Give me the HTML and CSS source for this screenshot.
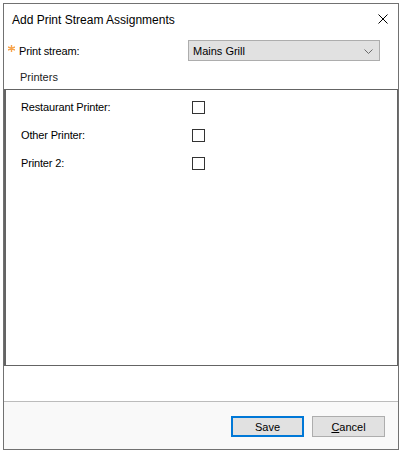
FILE: index.html
```html
<!DOCTYPE html>
<html>
<head>
<meta charset="utf-8">
<link rel="stylesheet" href="styles.css">
</head>
<body>
<div class="window">
  <div class="titlebar">
    <span class="title">Add Print Stream Assignments</span>
    <svg class="close" width="10" height="10" viewBox="0 0 10 10"><path d="M0.5 0.5 L9.5 9.5 M9.5 0.5 L0.5 9.5" stroke="#000" stroke-width="1" fill="none"/></svg>
  </div>
  <div class="stream-row">
    <svg class="req" width="7" height="7" viewBox="0 0 7 7"><path d="M3.5 0 V7 M0 2 L7 5 M0 5 L7 2" stroke="#f7a24a" stroke-width="1.4" fill="none"/></svg>
    <span class="stream-label">Print stream:</span>
    <div class="select">
      <span>Mains Grill</span>
      <svg width="9" height="5" viewBox="0 0 9 5"><path d="M0.5 0.5 L4.5 4.5 L8.5 0.5" stroke="#6a6a6a" stroke-width="1" fill="none"/></svg>
    </div>
  </div>
  <div class="caption">Printers</div>
  <div class="panel">
    <div class="prow"><span class="plabel">Restaurant Printer:</span><span class="check"></span></div>
    <div class="prow"><span class="plabel">Other Printer:</span><span class="check"></span></div>
    <div class="prow"><span class="plabel">Printer 2:</span><span class="check"></span></div>
  </div>
  <div class="spacer"></div>
  <div class="footer">
    <button class="btn primary">Save</button>
    <button class="btn"><u>C</u>ancel</button>
  </div>
</div>
</body>
</html>
```
FILE: styles.css
```css
html, body { margin: 0; padding: 0; background: #fff; }
body { font-family: "Liberation Sans", Arial, sans-serif; font-size: 11px; color: #000; }
.window {
  margin: 3px 0 0 3px;
  width: 396px;
  height: 447px;
  box-sizing: border-box;
  border: 1px solid #717171;
  display: flex;
  flex-direction: column;
  background: #fff;
}
.titlebar {
  height: 32px;
  display: flex;
  align-items: center;
  justify-content: space-between;
  padding: 0 10px 0 8px;
  flex: none;
}
.title { font-family: "Liberation Sans", Arial, sans-serif; font-size: 12px; color: #000; }
.close { display: block; margin-top: -2px; }
.stream-row {
  display: flex;
  align-items: center;
  height: 21px;
  margin-top: 4px;
  padding-left: 4px;
  flex: none;
}
.req { display: block; width: 7px; height: 7px; margin: -5px 4px 0 0; flex: none; }
.stream-label { width: 169px; letter-spacing: -0.15px; }
.select {
  width: 192px;
  height: 21px;
  box-sizing: border-box;
  border: 1px solid #adadad;
  background: #e1e1e1;
  display: flex;
  align-items: center;
  justify-content: space-between;
  padding: 0 6px 0 4px;
}
.select svg { display: block; margin-top: 1px; }
.caption { margin: 9px 0 0 16px; height: 19px; line-height: 14px; flex: none; color: #222; }
.panel {
  height: 277px;
  box-sizing: border-box;
  border: 1px solid #646464;
  border-left-width: 2px;
  flex: none;
  padding-top: 3px;
}
.prow { height: 28px; display: flex; align-items: center; padding-left: 15px; }
.plabel { width: 171px; letter-spacing: -0.15px; }
.check { width: 13px; height: 13px; box-sizing: border-box; border: 1px solid #333; display: block; }
.spacer { flex: 1; }
.footer {
  height: 48px;
  flex: none;
  box-sizing: border-box;
  border-top: 1px solid #bcbcbc;
  background: #f9f9f9;
  display: flex;
  justify-content: flex-end;
  align-items: flex-start;
  padding: 14px 13px 0 0;
  gap: 8px;
}
.btn {
  width: 73px;
  height: 21px;
  box-sizing: border-box;
  border: 1px solid #adadad;
  background: #e1e1e1;
  font-family: "Liberation Sans", Arial, sans-serif;
  font-size: 11px;
  color: #000;
  padding: 0;
  margin: 0;
}
.btn.primary { border: 2px solid #0078d7; }
```
